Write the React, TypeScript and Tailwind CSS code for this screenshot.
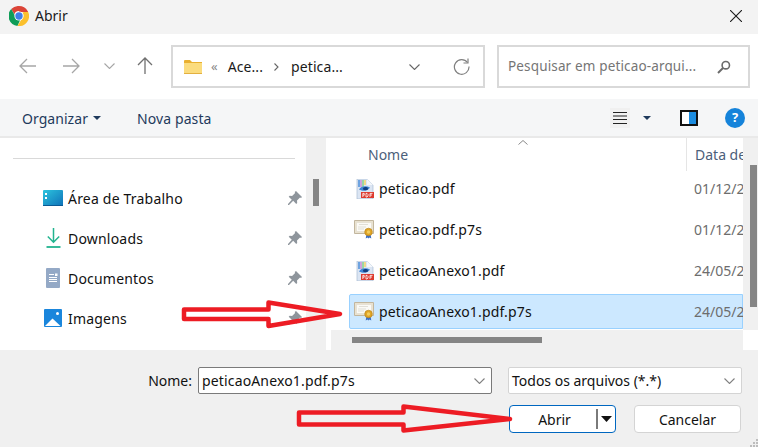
import { ReactNode } from "react";

const files = [
  { name: "peticao.pdf", date: "01/12/2", kind: "pdf" },
  { name: "peticao.pdf.p7s", date: "01/12/2", kind: "cert" },
  { name: "peticaoAnexo1.pdf", date: "24/05/2", kind: "pdf" },
  { name: "peticaoAnexo1.pdf.p7s", date: "24/05/2", kind: "cert", selected: true },
];

function ChromeLogo() {
  return (
    <svg width="20" height="20" viewBox="0 0 20 20" className="shrink-0">
      <path d="M10 0a10 10 0 0 1 8.66 5H10a5 5 0 0 0-4.7 3.3L2.2 3.1A10 10 0 0 1 10 0z" fill="#db4437" />
      <path d="M2.2 3.1 6.5 10.6a4 4 0 0 0 4.6 3.3L8.5 19.9A10 10 0 0 1 2.2 3.1z" fill="#0f9d58" />
      <path d="M18.66 5A10 10 0 0 1 8.5 19.9l4.3-7.2A5 5 0 0 0 13.5 6.5z" fill="#fbc02d" />
      <path d="M18.66 5H10v1h8.9z" fill="#db4437" />
      <circle cx="10" cy="10" r="4.6" fill="#fff" />
      <circle cx="10" cy="10" r="3.7" fill="#3f7fe8" />
    </svg>
  );
}

function FolderIcon() {
  return (
    <svg width="18" height="14" viewBox="0 0 18 14" className="shrink-0">
      <path d="M0 1a1 1 0 0 1 1-1h5l2 2h10v2H0z" fill="#e9b030" />
      <path d="M0 3h18v10a1 1 0 0 1-1 1H1a1 1 0 0 1-1-1z" fill="#fbdc7e" />
      <path d="M0 13h18v1H0z" fill="#e3b040" />
    </svg>
  );
}

function NavArrow({ dir }: { dir: "left" | "right" | "up" }) {
  const d =
    dir === "left"
      ? "M17 8H1M8 1 1 8l7 7"
      : dir === "right"
        ? "M0 8h16M9 1l7 7-7 7"
        : "M8 17V1M1 8l7-7 7 7";
  const size = dir === "up" ? "0 0 16 18" : "0 0 17 16";
  return (
    <svg width={dir === "up" ? 16 : 17} height={dir === "up" ? 18 : 16} viewBox={size} fill="none" stroke={dir === "up" ? "#707070" : "#a6a6a6"} strokeWidth="1.3">
      <path d={d} />
    </svg>
  );
}

function Chevron({ color = "#808080", w = 11 }: { color?: string; w?: number }) {
  return (
    <svg width={w} height="6" viewBox="0 0 11 6" fill="none" stroke={color} strokeWidth="1.1" className="shrink-0">
      <path d="M.5.5l5 5 5-5" />
    </svg>
  );
}

function Caret({ color = "#1f3a5c" }: { color?: string }) {
  return (
    <svg width="8" height="4" viewBox="0 0 8 4" className="shrink-0">
      <path d="M0 0h8L4 4z" fill={color} />
    </svg>
  );
}

function PinIcon() {
  return (
    <svg width="14" height="14" viewBox="0 0 14 14" className="shrink-0">
      <path d="M8 0l6 6-1 1-1-.4-3 3 .2 2.4-1 1-3-3.2L1 14l-1 0 0-1 3.800-4.300L.7 5.800l1-1 2.400.2 3-3L6.700 1z" fill="#8e959c" />
    </svg>
  );
}

function PdfIcon() {
  return (
    <svg width="18" height="20" viewBox="0 0 18 20" className="shrink-0">
      <path d="M1 0h10l6 6v14H1z" fill="#dbe5f3" stroke="#a9bbd3" strokeWidth=".7" />
      <path d="M2 1h2v7H2z" fill="#6ea3e0" />
      <path d="M4 1h2v7H4z" fill="#cfa3dc" />
      <path d="M6 1h2v7H6z" fill="#9ad6a5" />
      <path d="M8 1h2v5H8z" fill="#f1d98a" />
      <path d="M11 0l6 6h-6z" fill="#f4f7fb" />
      <path d="M3 10.500c2-3.500 7-4 11-2-1.500 3-6 4.500-11 2z" fill="#3f86d6" />
      <path d="M7 10a2.500 1.600 0 0 0 5-.6 2.500 1.600 0 0 0-5 .6z" fill="#123f80" />
      <path d="M5 13h13v6H5z" fill="#dd3b30" />
      <path d="M6.800 18v-3.600h1.400v1.800H7M10 14.400v3.600h1l1-1v-1.600l-1-1zM14 18v-3.600h2.500M14 16h2" fill="none" stroke="#fff" strokeWidth=".8" />
    </svg>
  );
}

function CertIcon() {
  return (
    <svg width="21" height="19" viewBox="0 0 21 19" className="shrink-0">
      <path d="M.5.5h19v13H.5z" fill="#e9e2d0" stroke="#c2b69e" strokeWidth="1" />
      <path d="M2.500 2.500h15v9h-15z" fill="#fbfaf6" stroke="#ddd6c6" strokeWidth=".5" />
      <path d="M5 4.500h9M4 7h8M4 9h6" stroke="#d6d2c8" strokeWidth=".7" />
      <path d="M12.500 14l-.8 4.500 1.800-1 1 1 1-1 1.800 1-.8-4.500z" fill="#3d6fc4" />
      <circle cx="14.500" cy="12" r="3.800" fill="#e0a526" stroke="#b57f15" strokeWidth=".6" />
      <circle cx="14.500" cy="12" r="1.700" fill="#f3cd5c" />
    </svg>
  );
}

function PlaceIcon({ kind }: { kind: string }) {
  if (kind === "desktop")
    return (
      <svg width="20" height="16" viewBox="0 0 20 16">
        <defs>
          <linearGradient id="desk" x1="0" y1="0" x2="1" y2="1">
            <stop offset="0" stopColor="#2cc4de" />
            <stop offset="1" stopColor="#0f71b8" />
          </linearGradient>
        </defs>
        <rect width="20" height="16" rx="1" fill="url(#desk)" />
        <path d="M2 3h2v2H2zM2 7h2v2H2z" fill="#fff" />
        <path d="M0 15h20v1H0z" fill="#0b5a94" />
      </svg>
    );
  if (kind === "downloads")
    return (
      <svg width="15" height="20" viewBox="0 0 15 20" fill="none" stroke="#22b48f" strokeWidth="1.500">
        <path d="M7.500 0v14M1.800 8.500l5.700 5.700 5.700-5.700" />
        <path d="M.5 19h14" strokeWidth="1.800" />
      </svg>
    );
  if (kind === "docs")
    return (
      <svg width="14" height="20" viewBox="0 0 14 20">
        <rect width="14" height="20" rx="1" fill="#94a9c6" />
        <path d="M3 6h5v1H3zM3 9h8v1H3zM3 11h8v1H3zM3 13h8v1H3z" fill="#fff" />
        <path d="M9 5.500h2.500v2.500H9z" fill="#fff" />
      </svg>
    );
  return (
    <svg width="18" height="18" viewBox="0 0 18 18">
      <rect width="18" height="18" rx="1" fill="#1a86dc" />
      <circle cx="13.500" cy="4.500" r="1.500" fill="#fff" />
      <path d="M1 17l7.500-7.500L16.500 17z" fill="#fff" />
    </svg>
  );
}

function SidebarItem({ kind, label }: { kind: string; label: string }) {
  return (
    <div className="flex h-10 items-center pr-[4px] pl-[43px] text-[14px] text-[#111]">
      <div className="flex w-[20px] shrink-0 justify-center">
        <PlaceIcon kind={kind} />
      </div>
      <span className="ml-[5px] flex-1 tracking-[0.2px]">{label}</span>
      <PinIcon />
    </div>
  );
}

function FieldBox({ className, children }: { className: string; children: ReactNode }) {
  return <div className={`flex h-[43px] items-center border-2 border-[#d9d9d9] bg-white ${className}`}>{children}</div>;
}

export default function App() {
  return (
    <div className="relative flex h-[447px] w-[758px] flex-col overflow-hidden bg-white font-['Noto_Sans',sans-serif] text-[14px] text-[#1a1a1a]">
      {/* title bar */}
      <div className="flex h-[34px] shrink-0 items-center bg-[#f3f3f3] pr-[16px] pb-[3px] pl-[9px]">
        <ChromeLogo />
        <span className="ml-[6px] flex-1 text-[14px]">Abrir</span>
        <svg width="12" height="12" viewBox="0 0 12 12" stroke="#1a1a1a" strokeWidth="1.100">
          <path d="M0 0l12 12M12 0 0 12" />
        </svg>
      </div>

      {/* address row */}
      <div className="flex h-[65px] shrink-0 items-center pr-[7px] pl-[19px]">
        <div className="mb-[2px] flex items-center">
          <NavArrow dir="left" />
          <div className="ml-[27px]">
            <NavArrow dir="right" />
          </div>
          <div className="ml-[24px]">
            <Chevron color="#a6a6a6" />
          </div>
          <div className="ml-[22px]">
            <NavArrow dir="up" />
          </div>
        </div>
        <FieldBox className="ml-[18px] w-[314px] pr-[13px] pl-[11px]">
          <FolderIcon />
          <span className="ml-[9px] text-[13px] text-[#888]">«</span>
          <span className="ml-[10px] tracking-[0.1px]">Ace...</span>
          <svg width="5" height="8" viewBox="0 0 5 8" fill="none" stroke="#666" strokeWidth="1.100" className="ml-[11px]">
            <path d="M.5.500 4 4 .5 7.500" />
          </svg>
          <span className="ml-[12px] tracking-[0.1px]">petica...</span>
          <div className="ml-auto flex items-center gap-[32px]">
            <Chevron color="#666" w={13} />
            <svg width="17" height="17" viewBox="0 0 17 17" fill="none" stroke="#808080" strokeWidth="1.200">
              <path d="M14.500 4.500A7.300 7.300 0 1 0 16 8.500" />
              <path d="M15 .5v4.500h-4.500" />
            </svg>
          </div>
        </FieldBox>
        <FieldBox className="ml-[12px] w-[253px] pr-[17px] pl-[9px]">
          <span className="flex-1 text-[13.5px] tracking-[0.15px] text-[#757575]">Pesquisar em peticao-arqui...</span>
          <svg width="14" height="14" viewBox="0 0 14 14" fill="none" stroke="#6b6b6b" strokeWidth="1.600">
            <circle cx="8.800" cy="5.200" r="3.700" />
            <path d="M6 8 1 13" strokeWidth="2" />
          </svg>
        </FieldBox>
      </div>

      {/* toolbar */}
      <div className="flex h-[39px] shrink-0 items-center border-b-2 border-[#e9e9e9] bg-[#f5f6f7] pr-[13px] pl-[22px] text-[#1f3a5c]">
        <span className="mt-[1px] tracking-[0.05px]">Organizar</span>
        <div className="ml-[5px]">
          <Caret />
        </div>
        <span className="mt-[1px] ml-[36px] tracking-[0.1px]">Nova pasta</span>
        <div className="ml-auto flex items-center">
          <div className="flex h-[20px] w-[20px] items-center justify-center bg-[#f0f0f0]">
            <svg width="14" height="12" viewBox="0 0 14 12" stroke="#222" strokeWidth="1">
              <path d="M0 .5h14M0 4h14M0 7.500h14M0 11.500h14" />
            </svg>
          </div>
          <div className="ml-[13px]">
            <Caret />
          </div>
          <div className="ml-[29px] flex h-[16px] w-[18px] border-2 border-[#111] bg-white">
            <div className="ml-auto w-[7px] bg-[#1b8ce0]" />
          </div>
          <div className="ml-[27px] flex h-[20px] w-[20px] items-center justify-center rounded-full bg-[#1583da] text-[13px] leading-none font-bold text-white">
            ?
          </div>
        </div>
      </div>

      {/* main */}
      <div className="flex h-[212px] shrink-0 overflow-hidden">
        <div className="w-[306px] shrink-0 pt-[20px]">
          <div className="mr-[11px] ml-[13px] h-px bg-[#d9d9d9]" />
          <div className="mt-[19px]">
            <SidebarItem kind="desktop" label="Área de Trabalho" />
            <SidebarItem kind="downloads" label="Downloads" />
            <SidebarItem kind="docs" label="Documentos" />
            <SidebarItem kind="images" label="Imagens" />
          </div>
        </div>

        <div className="w-[20px] shrink-0 bg-[#f0f0f0] pt-[41px] pl-[7px]">
          <div className="h-[27px] w-[6px] bg-[#858585]" />
        </div>

        <div className="flex w-[432px] min-w-0 flex-col pl-[5px]">
          <div className="flex h-[192px] shrink-0">
            <div className="w-[412px] shrink-0 overflow-hidden">
              <div className="relative flex h-[33px] items-center">
                <span className="absolute top-[2px] left-[187px]">
                  <svg width="10" height="5" viewBox="0 0 10 5" fill="none" stroke="#888" strokeWidth="1">
                    <path d="M.5 4.500 5 .5l4.500 4" />
                  </svg>
                </span>
                <span className="w-[355px] shrink-0 pl-[37px] text-[#4c607a]">Nome</span>
                <span className="h-full w-px shrink-0 bg-[#e5e5e5]" />
                <span className="pl-[8px] whitespace-nowrap text-[#4c607a]">Data de</span>
              </div>
              <div className="flex flex-col gap-[6px]">
                {files.map((f) => (
                  <div
                    key={f.name}
                    className={`ml-[18px] flex h-[35px] items-center border pl-[3px] ${
                      f.selected ? "rounded-l-[2px] border-[#99d1ff] bg-[#cce8ff]" : "border-transparent"
                    }`}
                  >
                    <div className="flex w-[23px] shrink-0 justify-center">
                      {f.kind === "pdf" ? <PdfIcon /> : <CertIcon />}
                    </div>
                    <span className="ml-[3px] w-[313px] shrink-0 tracking-[0.15px] text-[#111]">{f.name}</span>
                    <span className="ml-[2px] whitespace-nowrap text-[#6d6d6d]">{f.date}</span>
                  </div>
                ))}
              </div>
            </div>
            <div className="w-[15px] shrink-0 bg-[#f0f0f0] pt-[27px] pl-[7px]">
              <div className="h-[142px] w-[7px] bg-[#858585]" />
            </div>
          </div>
          <div className="h-[20px] w-[412px] shrink-0 bg-[#f0f0f0] pt-[7px] pl-[21px]">
            <div className="h-[6px] w-[190px] bg-[#858585]" />
          </div>
        </div>
      </div>

      {/* footer */}
      <div className="relative flex flex-1 flex-col items-end bg-[#f0f0f0] pt-[17px] pr-[16px]">
        <div className="flex h-[27px] items-center">
          <span className="mr-[6px] text-[#111]">Nome:</span>
          <div className="flex h-[27px] w-[294px] items-center justify-between rounded-[2px] border border-[#7a7a7a] bg-white pr-[6px] pl-[3px]">
            <span className="tracking-[0.15px] text-[#111]">peticaoAnexo1.pdf.p7s</span>
            <Chevron />
          </div>
          <div className="ml-[16px] flex h-[27px] w-[234px] items-center justify-between rounded-[2px] border border-[#d4d4d4] bg-white pr-[6px] pl-[3px]">
            <span className="text-[#111]">Todos os arquivos (*.*)</span>
            <Chevron />
          </div>
        </div>
        <div className="mt-[11px] flex h-[28px] items-center pr-px">
          <div className="flex h-[28px] w-[107px] items-center rounded-[4px] border border-[#0067c0] bg-white">
            <span className="flex-1 pl-[3px] text-center text-[#111]">Abrir</span>
            <span className="h-[20px] w-[2px] bg-[#7a7a7a]" />
            <div className="mx-[3px]">
              <svg width="11" height="6" viewBox="0 0 11 6">
                <path d="M0 0h11L5.500 6z" fill="#111" />
              </svg>
            </div>
          </div>
          <div className="ml-[18px] flex h-[28px] w-[107px] items-center justify-center rounded-[4px] border border-[#d4d4d4] bg-white text-[#111]">
            Cancelar
          </div>
        </div>
        <svg width="8" height="8" viewBox="0 0 8 8" className="absolute right-0 bottom-0" fill="#bdbdbd">
          <path d="M6 0h2v2H6zM3 3h2v2H3zM6 3h2v2H6zM0 6h2v2H0zM3 6h2v2H3zM6 6h2v2H6z" />
        </svg>
      </div>

      {/* red annotation arrows */}
      <svg width="758" height="447" viewBox="0 0 758 447" fill="none" stroke="#ed1c24" strokeWidth="4.500" strokeLinejoin="round" className="pointer-events-none absolute top-0 left-0">
        <path d="M184 309.500h84.500v-7L340 314l-71.500 12v-7H184z" />
        <path d="M299 412.500h104.500v-6L510 419l-106.500 11.500v-6H299z" />
      </svg>
    </div>
  );
}
